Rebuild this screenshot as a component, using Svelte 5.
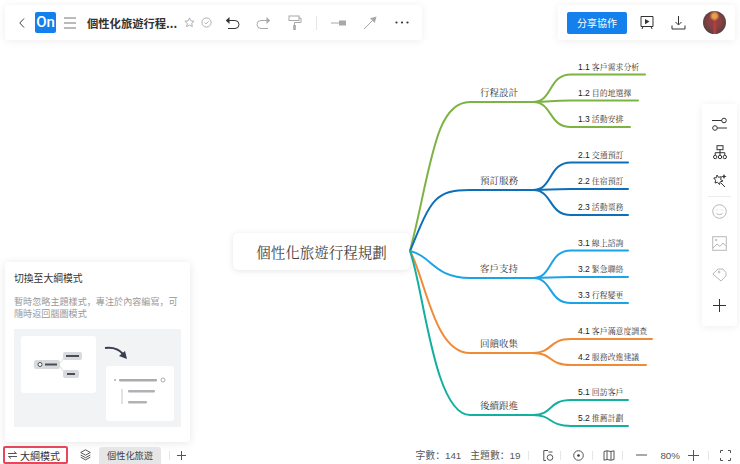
<script>
	const branches = [
		{ label: '行程設計', color: '#7cb342', y: 102, c1: [431, 170], kids: [['1.1', '客戶需求分析', 74.5, 645], ['1.2', '目的地選擇', 100.5, 638], ['1.3', '活動安排', 127, 630]] },
		{ label: '預訂服務', color: '#0d6fb8', y: 190, c1: [431, 200], kids: [['2.1', '交通預訂', 162.5, 628], ['2.2', '住宿預訂', 189, 628], ['2.3', '活動票務', 215, 628]] },
		{ label: '客戶支持', color: '#1ba3e8', y: 278, c1: [432, 256], kids: [['3.1', '線上諮詢', 250.5, 628], ['3.2', '緊急聯絡', 277, 628], ['3.3', '行程變更', 303, 628]] },
		{ label: '回饋收集', color: '#f08a35', y: 353, c1: [426, 280], kids: [['4.1', '客戶滿意度調查', 339, 652], ['4.2', '服務改進建議', 365, 646]] },
		{ label: '後續跟進', color: '#14b09f', y: 415, c1: [424, 290], kids: [['5.1', '回訪客戶', 400, 628], ['5.2', '推薦計劃', 426, 628]] }
	];
	const rootX = 410;
	const rootY = 251;
</script>

<div class="page">
	<div class="root-node">個性化旅遊行程規劃</div>

	<svg class="map" viewBox="0 0 740 464" width="740" height="464">
		{#each branches as b}
			<path d="M{rootX} {rootY} C{b.c1[0]} {b.c1[1]} 434 {b.y} 470 {b.y} L533 {b.y}" stroke={b.color} />
			<text class="main-label" x="480" y={b.y - 6}>{b.label}</text>
			{#each b.kids as k}
				<path d="M533 {b.y} C553 {b.y} 548 {k[2]} 571 {k[2]} L{k[3]} {k[2]}" stroke={b.color} />
				<text class="kid-label" x="578" y={k[2] - 5}><tspan class="num">{k[0]}</tspan> {k[1]}</text>
			{/each}
		{/each}
	</svg>

	<header class="top">
		<div class="bar left">
			<svg class="ic chev" width="8" height="12" viewBox="0 0 8 12"><path d="M6 1.500 1.800 6 6 10.500" /></svg>
			<div class="logo">On</div>
			<svg class="ic menu" width="12" height="12" viewBox="0 0 12 12"><path d="M0 1h12M0 6h12M0 11h12" /></svg>
			<div class="doc-title">個性化旅遊行程...</div>
			<svg class="ic faint star" width="11" height="11" viewBox="0 0 12 12"><path d="M6 1l1.500 3.200 3.500.4-2.600 2.400.7 3.500L6 8.800l-3.100 1.700.7-3.500L1 4.600l3.500-.4z" /></svg>
			<svg class="ic faint check" width="11" height="11" viewBox="0 0 12 12"><circle cx="6" cy="6" r="5" /><path d="M3.800 6l1.600 1.600 3-3" /></svg>
			<svg class="ic undo" width="15" height="14" viewBox="0 0 15 14"><path d="M3 4.500h7a3.800 3.800 0 0 1 0 8H3" /><path class="solid" d="M4.500 1v7L0.800 4.500z" /></svg>
			<svg class="ic faint redo" width="15" height="14" viewBox="0 0 15 14"><path d="M12 4.500H5a3.800 3.800 0 0 0 0 8h7" /><path class="solid" d="M10.500 1v7l3.700-3.500z" /></svg>
			<svg class="ic faint roller" width="14" height="16" viewBox="0 0 14 16"><rect x="1" y="1" width="10" height="4.500" /><path d="M11 3h2v4.500H6.500V10" /><rect class="solid" x="5.200" y="10" width="2.600" height="5" /></svg>
			<span class="sep"></span>
			<svg class="ic faint conn" width="15" height="6" viewBox="0 0 15 6"><path d="M0 3h8" /><rect class="solid" x="8" y="0.500" width="7" height="5" /></svg>
			<svg class="ic faint arrow" width="14" height="14" viewBox="0 0 14 14"><path d="M1 13 10 4" /><path class="solid" d="M13.500.5 11.800 7 7 2.200z" /></svg>
			<svg class="dots" width="14" height="3" viewBox="0 0 14 3"><circle cx="1.500" cy="1.500" r="1.100" /><circle cx="7" cy="1.500" r="1.100" /><circle cx="12.500" cy="1.500" r="1.100" /></svg>
		</div>
		<div class="bar right">
			<button class="share">分享協作</button>
			<svg class="ic play" width="14" height="15" viewBox="0 0 14 15"><path d="M1 1.500h12v10H1zM3 11.500 2 14M11 11.500l1 2.500" /><path class="solid" d="M5 4l4.500 2.600L5 9.200z" /></svg>
			<svg class="ic down" width="15" height="15" viewBox="0 0 15 15"><path d="M7.500 1v8.500M4.500 7l3 3 3-3M1 10.500V14h13v-3.500" /></svg>
			<div class="avatar"></div>
		</div>
	</header>

	<aside class="dock">
		<svg class="ic" width="15" height="15" viewBox="0 0 15 15"><path d="M0 3.500h10M5 11h10" /><circle class="white" cx="12" cy="3.500" r="2.300" /><circle class="white" cx="3" cy="11" r="2.300" /></svg>
		<svg class="ic" width="14" height="15" viewBox="0 0 14 15"><rect x="4" y="0.700" width="6" height="4" /><path d="M7 4.700v3M2.200 10V7.700h9.600V10M7 7.700V10" /><circle cx="2.200" cy="12" r="1.700" /><circle cx="7" cy="12" r="1.700" /><circle cx="11.800" cy="12" r="1.700" /></svg>
		<svg class="ic" width="15" height="15" viewBox="0 0 15 15"><path d="M5 2 6.500 4.300l2.800-.6-.7 2.800L11 8l-2.800.8-.7 2.700L5.600 9.300 3 10l.6-2.700L1.800 5l2.800-.4z" /><path d="M9 10l4 4" /><path class="solid" d="M12 1l.8 1.700 1.700.8-1.700.8L12 6l-.8-1.700-1.700-.8 1.700-.8z" /></svg>
		<span class="dock-sep"></span>
		<div class="dock-lower">
			<svg class="ic pale" width="15" height="15" viewBox="0 0 15 15"><circle cx="7.500" cy="7.500" r="6.800" /><path d="M4.500 9.300c1.500 1.800 4.500 1.800 6 0M5 5.500v.8M10 5.500v.8" /></svg>
			<svg class="ic pale" width="15" height="15" viewBox="0 0 15 15"><rect x="0.700" y="0.700" width="13.600" height="13.600" /><path d="M1 12l4-4 3 2.500 3-3.500 3.300 3" /><circle class="solid" cx="4" cy="4" r="1.100" /></svg>
			<svg class="ic pale" width="15" height="15" viewBox="0 0 15 15"><path d="M.8 7 6 2h5l3 3.500v3.300L9 14z" /><circle cx="7" cy="5" r="0.900" /></svg>
			<svg class="ic" width="13" height="13" viewBox="0 0 13 13"><path d="M6.500 0v13M0 6.500h13" /></svg>
		</div>
	</aside>

	<section class="tip">
		<h3>切換至大綱模式</h3>
		<p>暫時忽略主題樣式，專注於內容編寫，可隨時返回腦圖模式</p>
		<div class="art">
			<svg width="167" height="98" viewBox="0 0 167 98">
				<rect x="7" y="7" width="75" height="57" rx="3" fill="#fff" />
				<path d="M42 35C50 35 46 27 56 27M42 36C50 36 46 45 56 45" fill="none" stroke="#dcdde0" />
				<rect x="20" y="31" width="26" height="9" rx="2" fill="#d9dadd" />
				<circle cx="26" cy="35.500" r="2" fill="#fff" stroke="#4a4c55" />
				<rect x="31" y="34.500" width="12" height="2" fill="#4a4c55" />
				<rect x="49" y="23" width="19" height="8" rx="2" fill="#d9dadd" />
				<rect x="52" y="26" width="13" height="2" fill="#4a4c55" />
				<rect x="49" y="41" width="16" height="8" rx="2" fill="#d9dadd" />
				<rect x="53" y="44" width="8" height="2" fill="#4a4c55" />
				<path d="M91 19c7-1 13 0 18 6" fill="none" stroke="#3a3d52" stroke-width="2" />
				<path d="M113 30l-8-3 6-5z" fill="#3a3d52" />
				<rect x="92" y="37" width="68" height="55" rx="3" fill="#fff" />
				<circle cx="101" cy="51" r="1" fill="#a9abaf" />
				<rect x="105" y="50" width="38" height="2.500" rx="1" fill="#a9abaf" />
				<circle cx="149" cy="51" r="2" fill="#fff" stroke="#a9abaf" />
				<path d="M108 60v15" stroke="#c4c5c9" />
				<rect x="114" y="61" width="27" height="2.500" rx="1" fill="#b0b2b6" />
				<rect x="114" y="72" width="19" height="2.500" rx="1" fill="#b0b2b6" />
			</svg>
		</div>
	</section>

	<footer class="bottom">
		<div class="group">
			<div class="outline-btn">
				<svg class="ic thin" width="9" height="8" viewBox="0 0 9 8"><path d="M0 2.500h8.500L6 .5M9 5.500H.5L3 7.500" /></svg>
				<span>大綱模式</span>
			</div>
			<svg class="ic layers" width="11" height="12" viewBox="0 0 11 12"><path d="M5.500.8 10.300 3.500 5.500 6.200.7 3.500zM.7 6l4.800 2.700L10.300 6M.7 8.200l4.800 2.700 4.800-2.700" /></svg>
			<div class="tab">個性化旅遊</div>
			<span class="sep tab-sep"></span>
			<svg class="ic thin" width="9" height="9" viewBox="0 0 9 9"><path d="M4.500 0v9M0 4.500h9" /></svg>
		</div>
		<div class="group stats">
			<span>字數：141</span>
			<span class="topics">主題數：19</span>
			<span class="sep s1"></span>
			<svg class="ic thin" width="11" height="11" viewBox="0 0 11 11"><path d="M5 .5H.8v10H3" /><circle cx="7" cy="7.500" r="2.800" /><path d="M5.500 2h4" /></svg>
			<span class="sep s2"></span>
			<svg class="ic thin" width="11" height="11" viewBox="0 0 11 11"><circle cx="5.500" cy="5.500" r="4.800" /><circle class="solid" cx="5.500" cy="5.500" r="1.300" /></svg>
			<span class="sep s3"></span>
			<svg class="ic thin" width="12" height="11" viewBox="0 0 12 11"><path d="M1 1.500 4 .8l4 .7 3-.7v8.700l-3 .7-4-.7-3 .7zM4 .8v8.700M8 1.500v8.700" /></svg>
			<span class="sep s4"></span>
			<svg class="ic thin" width="11" height="2" viewBox="0 0 11 2"><path d="M0 1h11" /></svg>
			<span class="zoom">80%</span>
			<svg class="ic thin" width="11" height="11" viewBox="0 0 11 11"><path d="M5.500 0v11M0 5.500h11" /></svg>
			<span class="sep s5"></span>
			<svg class="ic thin" width="11" height="11" viewBox="0 0 11 11"><path d="M.5 3V.5H3M8 .5h2.500V3M10.500 8v2.500H8M3 10.500H.5V8" /></svg>
		</div>
	</footer>
</div>

<style>
	:global(body) {
		margin: 0;
		font-family: 'Noto Sans CJK SC', 'Liberation Sans', sans-serif;
		color: #333;
		background: #fff;
	}
	.page {
		position: relative;
		width: 740px;
		height: 464px;
		overflow: hidden;
		background: #fff;
	}
	.map {
		position: absolute;
		inset: 0;
	}
	.map path {
		fill: none;
		stroke-width: 2;
		stroke-linecap: round;
	}
	.map text {
		font-family: 'Noto Serif CJK TC', 'Noto Sans CJK TC', serif;
		fill: #333;
	}
	.main-label {
		font-size: 9.500px;
	}
	.kid-label {
		font-size: 7.900px;
	}
	.num {
		font-family: 'Liberation Sans', sans-serif;
		font-size: 8.500px;
		font-weight: 400;
		fill: #222;
	}
	.root-node {
		position: absolute;
		left: 233px;
		top: 233px;
		width: 177px;
		height: 37px;
		display: flex;
		align-items: center;
		justify-content: center;
		background: #fff;
		border-radius: 5px;
		box-shadow: 0 1px 6px rgba(0, 0, 0, 0.1);
		font-family: 'Noto Serif CJK TC', 'Noto Sans CJK TC', serif;
		font-size: 14.500px;
		color: #444;
	}
	.ic {
		flex: none;
		fill: none;
		stroke: #333;
		stroke-width: 1;
	}
	.ic.faint {
		stroke: #a8a8a8;
	}
	.ic.pale {
		stroke: #b8b8b8;
	}
	.ic .solid {
		fill: #333;
		stroke: none;
	}
	.ic.faint .solid {
		fill: #a8a8a8;
	}
	.ic.pale .solid {
		fill: #b8b8b8;
	}
	.ic .white {
		fill: #fff;
	}
	.top {
		position: absolute;
		left: 5px;
		right: 5px;
		top: 5px;
		display: flex;
		justify-content: space-between;
	}
	.bar {
		height: 35px;
		display: flex;
		align-items: center;
		background: #fff;
		border-radius: 3px;
		box-shadow: 0 1px 8px rgba(0, 0, 0, 0.07);
	}
	.bar.left {
		width: 417px;
		padding-left: 13px;
		box-sizing: border-box;
	}
	.chev {
		stroke: #444;
	}
	.logo {
		width: 21px;
		height: 21px;
		margin-left: 9px;
		border-radius: 2px;
		background: #1380ec;
		color: #fff;
		font: 500 15px/21px Roboto, 'Liberation Sans', sans-serif;
		text-align: center;
	}
	.menu {
		margin-left: 8px;
		stroke: #777;
	}
	.doc-title {
		width: 92px;
		margin-left: 11px;
		font-size: 11.300px;
		font-weight: 700;
		white-space: nowrap;
		color: #333;
	}
	.star {
		margin-left: 4.500px;
	}
	.check {
		margin-left: 6px;
	}
	.undo {
		margin-left: 13.500px;
	}
	.redo {
		margin-left: 16px;
	}
	.roller {
		margin-left: 17px;
	}
	.sep {
		flex: none;
		width: 1px;
		height: 14px;
		background: #e6e6e6;
		margin-left: 14px;
	}
	.conn {
		margin-left: 14px;
	}
	.arrow {
		margin-left: 17px;
	}
	.dots {
		margin-left: 18px;
		fill: #333;
	}
	.bar.right {
		width: 177px;
		padding-left: 9px;
		box-sizing: border-box;
	}
	.share {
		width: 60px;
		height: 22px;
		padding: 0;
		border: 0;
		border-radius: 2px;
		background: #1380ec;
		color: #fff;
		font: 10px 'Noto Sans CJK SC', sans-serif;
	}
	.play {
		margin-left: 13px;
	}
	.down {
		margin-left: 17px;
	}
	.avatar {
		width: 23px;
		height: 23px;
		margin-left: 17px;
		border-radius: 50%;
		background:
			radial-gradient(circle at 50% 22%, #e9a04a 0 10%, transparent 24%),
			linear-gradient(90deg, transparent 42%, #b83a3a 46% 56%, transparent 60%),
			radial-gradient(circle at 50% 45%, #8a4144 0 35%, #55403f 75%);
	}
	.dock {
		position: absolute;
		left: 702px;
		top: 104px;
		width: 35px;
		height: 222px;
		padding-top: 13px;
		box-sizing: border-box;
		display: flex;
		flex-direction: column;
		align-items: center;
		gap: 13px;
		background: #fff;
		border-radius: 3px;
		box-shadow: 0 1px 8px rgba(0, 0, 0, 0.07);
	}
	.dock-sep {
		width: 23px;
		height: 1px;
		margin: -5px 0 -6px;
		background: #ececec;
	}
	.dock-lower {
		display: flex;
		flex-direction: column;
		align-items: center;
		gap: 16.500px;
	}
	.tip {
		position: absolute;
		left: 5px;
		top: 262px;
		width: 185px;
		height: 180px;
		padding: 8px 9px 9px;
		box-sizing: border-box;
		background: #fff;
		border-radius: 3px;
		box-shadow: 0 1px 8px rgba(0, 0, 0, 0.1);
	}
	h3 {
		margin: 0;
		font-size: 9.800px;
		line-height: 16px;
		font-weight: 400;
		color: #333;
	}
	p {
		margin: 9px 0 0;
		font-size: 9.100px;
		line-height: 12px;
		color: #999;
	}
	.art {
		height: 98px;
		margin-top: 10px;
		background: #f2f3f5;
	}
	.art svg {
		display: block;
	}
	.bottom {
		position: absolute;
		left: 0;
		right: 0;
		bottom: 0;
		height: 18px;
		display: flex;
		justify-content: space-between;
		align-items: center;
		font-size: 9.800px;
		color: #555;
	}
	.group {
		display: flex;
		align-items: center;
	}
	.outline-btn {
		display: flex;
		align-items: center;
		gap: 3px;
		width: 65px;
		height: 18px;
		margin-left: 3px;
		padding-left: 3px;
		box-sizing: border-box;
		border: 2px solid #e8475b;
		border-radius: 2px;
		font-size: 10px;
		color: #333;
	}
	.ic.thin {
		stroke: #555;
	}
	.layers {
		margin-left: 12px;
		stroke: #555;
	}
	.tab {
		width: 62px;
		height: 17px;
		margin-left: 8px;
		margin-top: 1px;
		border-radius: 3px 3px 0 0;
		background: #e6e6e6;
		font-size: 9.200px;
		line-height: 17px;
		text-align: center;
		color: #444;
	}
	.tab-sep,
	.stats .sep {
		height: 9px;
	}
	.tab-sep {
		margin: 0 7px 0 8px;
	}
	.stats {
		padding-right: 9.500px;
	}
	.stats span:not(.sep) {
		white-space: nowrap;
		font-family: 'Liberation Sans', 'Noto Sans CJK SC', sans-serif;
	}
	.topics {
		margin-left: 9px;
	}
	.s1 {
		margin: 0 13.500px 0 8px;
	}
	.s2 {
		margin: 0 11.500px 0 6.500px;
	}
	.s3 {
		margin: 0 10px 0 8.500px;
	}
	.s4 {
		margin: 0 12.500px 0 7px;
	}
	.s5 {
		margin: 0 10.500px 0 9.500px;
	}
	.zoom {
		margin: 0 7.500px 0 13.500px;
	}
</style>
